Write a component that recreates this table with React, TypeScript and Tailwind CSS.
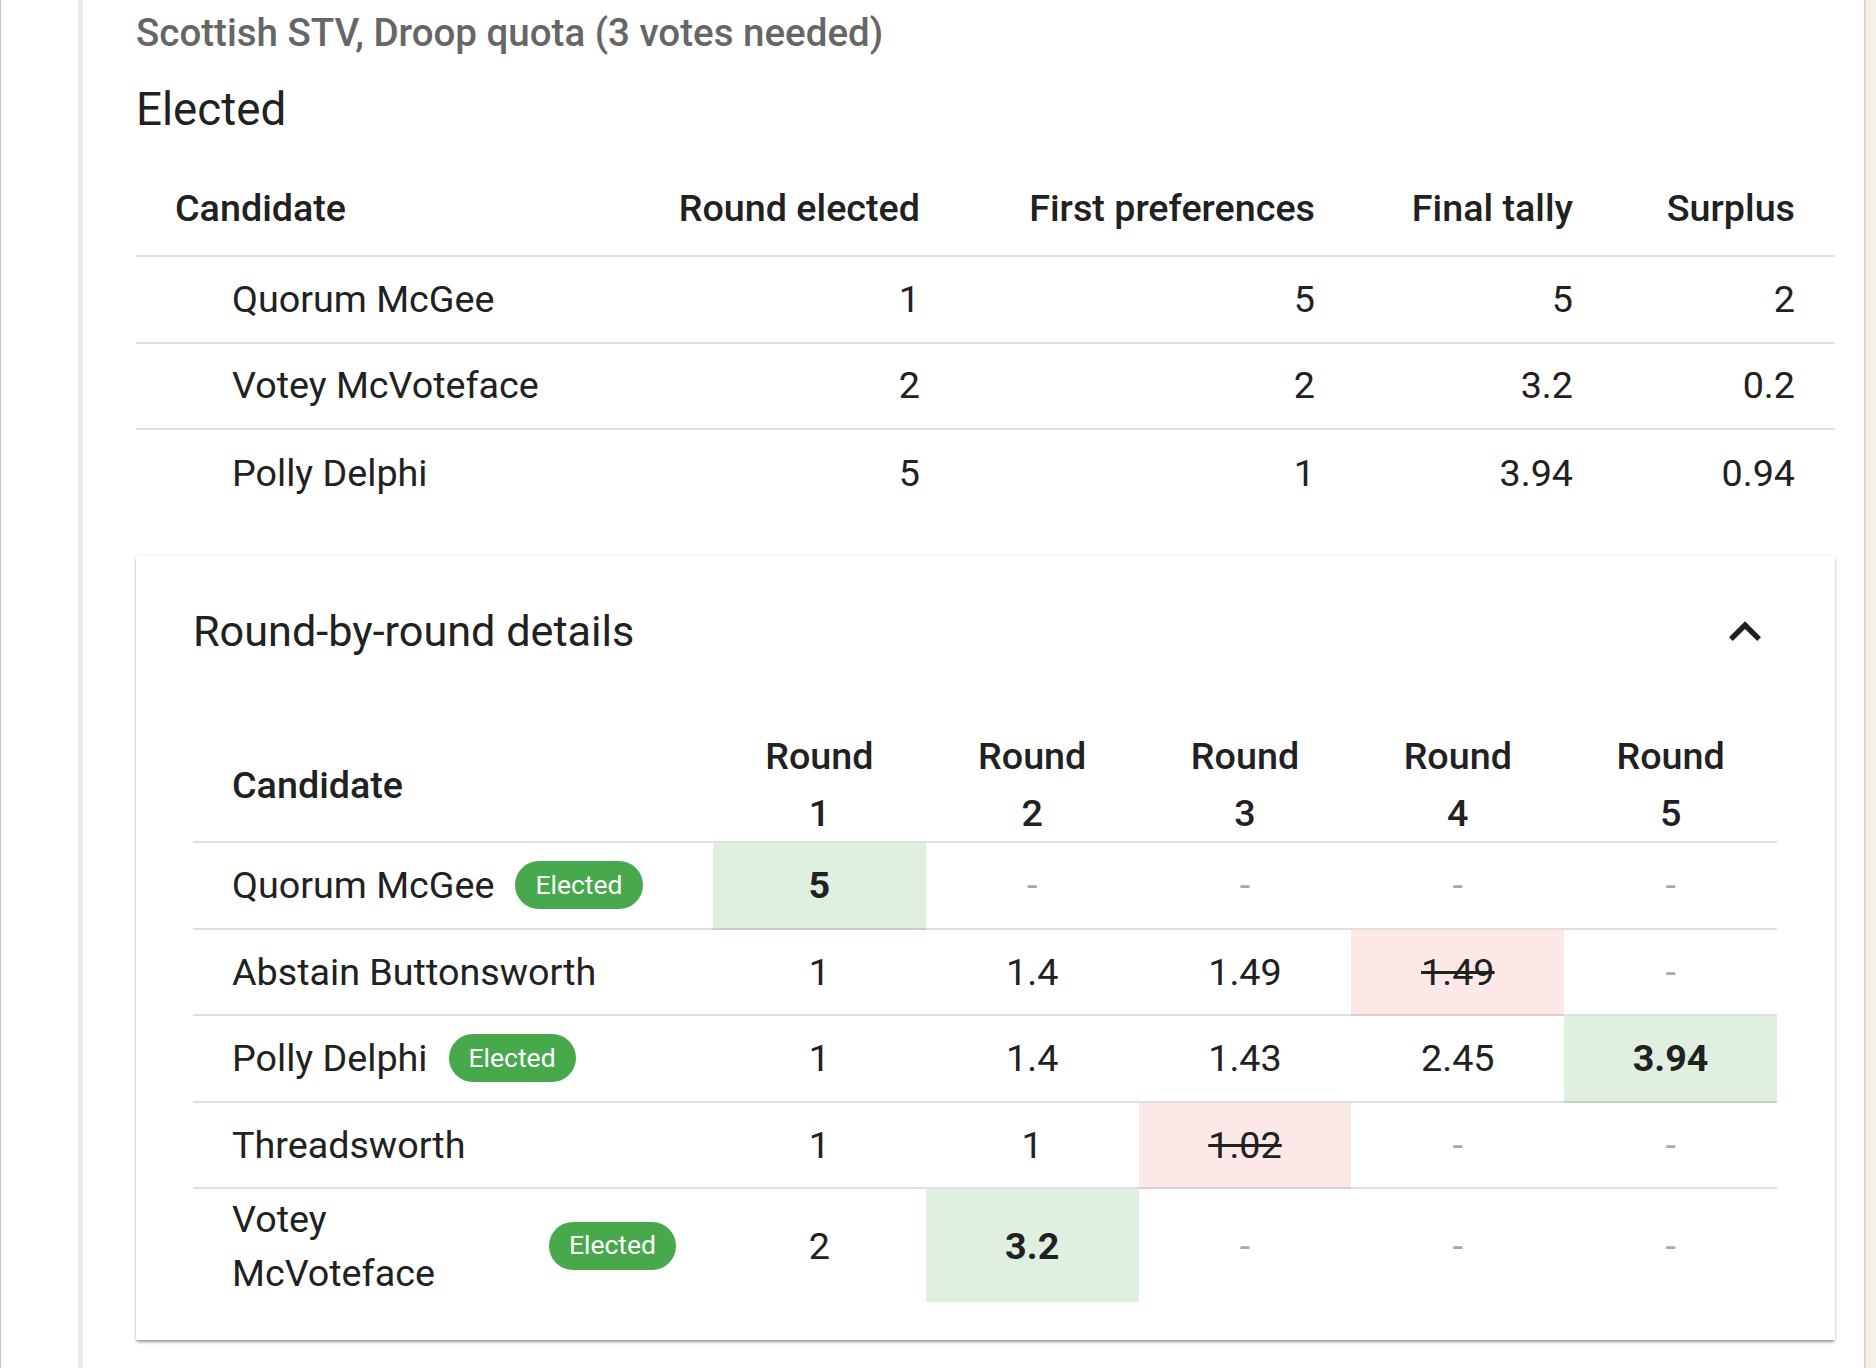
import React from "react";

type Cell = { v: string; t?: "win" | "out" };
type Row = { name: string; elected?: boolean; cells: Cell[] };

const rounds: Row[] = [
  { name: "Quorum McGee", elected: true, cells: [{ v: "5", t: "win" }, { v: "-" }, { v: "-" }, { v: "-" }, { v: "-" }] },
  { name: "Abstain Buttonsworth", cells: [{ v: "1" }, { v: "1.4" }, { v: "1.49" }, { v: "1.49", t: "out" }, { v: "-" }] },
  { name: "Polly Delphi", elected: true, cells: [{ v: "1" }, { v: "1.4" }, { v: "1.43" }, { v: "2.45" }, { v: "3.94", t: "win" }] },
  { name: "Threadsworth", cells: [{ v: "1" }, { v: "1" }, { v: "1.02", t: "out" }, { v: "-" }, { v: "-" }] },
  { name: "Votey McVoteface", elected: true, cells: [{ v: "2" }, { v: "3.2", t: "win" }, { v: "-" }, { v: "-" }, { v: "-" }] },
];

const elected = [
  ["Quorum McGee", "1", "5", "5", "2"],
  ["Votey McVoteface", "2", "2", "3.2", "0.2"],
  ["Polly Delphi", "5", "1", "3.94", "0.94"],
];

function Badge() {
  return (
    <span className="shrink-0 inline-flex h-[48px] items-center rounded-full bg-[#47a94c] px-[20px] text-[26.5px] leading-none text-white">
      Elected
    </span>
  );
}

export default function App() {
  return (
    <div className="flex h-[1368px] w-[1876px] overflow-hidden bg-white font-['Roboto',sans-serif] text-[#212121]">
      <div className="w-[1px] shrink-0 bg-[#cbc4bb]" />
      <div className="w-[77px] shrink-0" />
      <div className="w-[5px] shrink-0 bg-[#ebebeb]" />
      <main className="flex-1 pl-[53px] pr-[29px]">
        <div className="flex h-[64px] items-center text-[38.5px] font-medium leading-[57px] text-[#666666]">
          Scottish STV, Droop quota (3 votes needed)
        </div>
        <div className="flex h-[92px] items-center text-[45.7px] leading-[60px]">Elected</div>

        {/* Elected table */}
        <div className="mt-[5px] text-[37.7px] leading-[55px]">
          <div className="grid h-[96px] grid-cols-[520px_304px_395px_258px_222px] items-center border-b-2 border-[#e0e0e0] font-medium">
            <div className="pl-[39px]">Candidate</div>
            <div className="pr-[40px] text-right">Round elected</div>
            <div className="pr-[40px] text-right">First preferences</div>
            <div className="pr-[40px] text-right">Final tally</div>
            <div className="pr-[40px] text-right">Surplus</div>
          </div>
          {elected.map((r, i) => (
            <div
              key={r[0]}
              className={
                "grid grid-cols-[520px_304px_395px_258px_222px] items-center " +
                (i < elected.length - 1 ? "h-[86.5px] border-b-2 border-[#e0e0e0]" : "h-[87px]")
              }
            >
              <div className="pl-[96px]">{r[0]}</div>
              <div className="pr-[40px] text-right">{r[1]}</div>
              <div className="pr-[40px] text-right">{r[2]}</div>
              <div className="pr-[40px] text-right">{r[3]}</div>
              <div className="pr-[40px] text-right">{r[4]}</div>
            </div>
          ))}
        </div>

        {/* Round-by-round card */}
        <section className="mt-[39px] bg-white pb-[38px] pl-[57px] pr-[58px] shadow-[0_3px_3px_-1px_rgba(0,0,0,0.3),0_1px_2px_0_rgba(0,0,0,0.14),0_1px_5px_0_rgba(0,0,0,0.1)]">
          <div className="flex h-[152px] items-center justify-between">
            <h2 className="text-[43.2px] font-normal leading-[60px]">Round-by-round details</h2>
            <svg width="64" height="64" viewBox="0 0 24 24" className="shrink-0">
              <path d="M12 8l-6 6 1.41 1.41L12 10.83l4.59 4.58L18 14z" fill="#212121" />
            </svg>
          </div>

          <div className="mt-[20px] text-[37.7px]">
            <div className="grid h-[115px] grid-cols-[520px_repeat(5,1fr)] border-b-2 border-[rgba(0,0,0,0.12)] font-medium leading-[57px]">
              <div className="flex items-center pl-[39px]">Candidate</div>
              {[1, 2, 3, 4, 5].map((n) => (
                <div key={n} className="flex flex-col items-center justify-center text-center">
                  <span>Round</span>
                  <span>{n}</span>
                </div>
              ))}
            </div>
            {rounds.map((r, i) => {
              const last = i === rounds.length - 1;
              const rowCls = last ? "h-[113px]" : "h-[86.5px] border-b-2 border-[rgba(0,0,0,0.12)]";
              return (
                <div key={r.name} className="grid grid-cols-[520px_repeat(5,1fr)] leading-[54px]">
                  <div className={"flex items-center gap-[21px] pl-[39px] pr-[37px] " + rowCls}>
                    <span>{r.name}</span>
                    {r.elected && <Badge />}
                  </div>
                  {r.cells.map((c, j) => {
                    const bg = c.t === "win" ? "bg-[#dff0e1]" : c.t === "out" ? "bg-[#fde8e8]" : "";
                    const txt =
                      c.v === "-"
                        ? "text-[#a8a8a8]"
                        : c.t === "win"
                        ? "font-bold"
                        : c.t === "out"
                        ? "line-through"
                        : "";
                    return (
                      <div key={j} className={"flex items-center justify-center " + rowCls + " " + bg}>
                        <span className={txt}>{c.v}</span>
                      </div>
                    );
                  })}
                </div>
              );
            })}
          </div>
        </section>
      </main>
      <div className="w-[2px] shrink-0 bg-[#ddd5c9]" />
      <div className="w-[10px] shrink-0 bg-[#f6f1e9]" />
    </div>
  );
}
